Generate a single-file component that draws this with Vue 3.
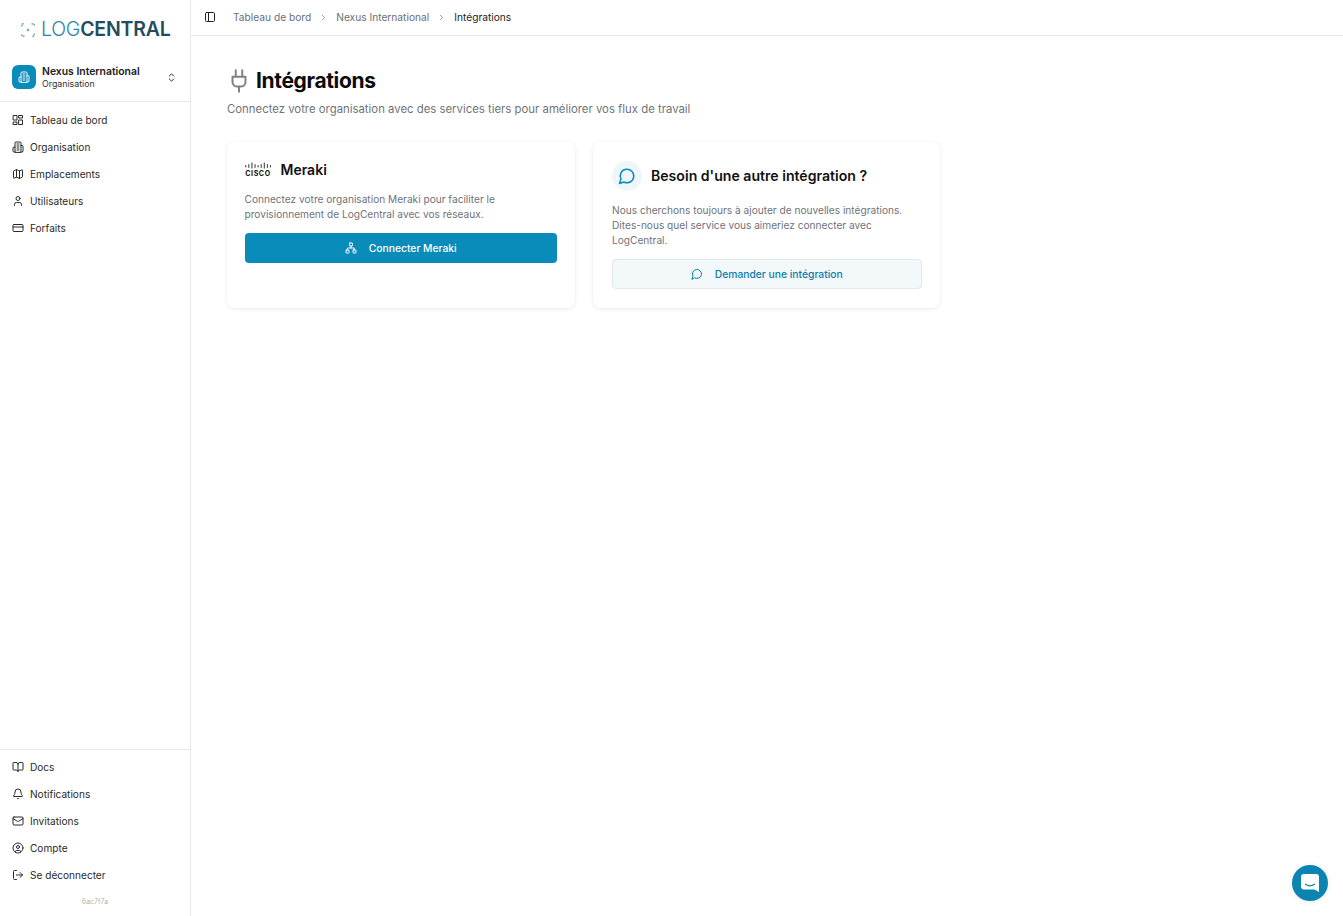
<script setup>
const mainNav = [
  { label: 'Tableau de bord', icon: 'dash' },
  { label: 'Organisation', icon: 'org' },
  { label: 'Emplacements', icon: 'map' },
  { label: 'Utilisateurs', icon: 'user' },
  { label: 'Forfaits', icon: 'card' }
]
const bottomNav = [
  { label: 'Docs', icon: 'book' },
  { label: 'Notifications', icon: 'bell' },
  { label: 'Invitations', icon: 'mail' },
  { label: 'Compte', icon: 'account' },
  { label: 'Se déconnecter', icon: 'logout' }
]
const icons = {
  dash: 'M3 3h7v9H3zM14 3h7v5h-7zM14 12h7v9h-7zM3 16h7v5H3z',
  org: 'M6 22V4a2 2 0 0 1 2-2h8a2 2 0 0 1 2 2v18zM6 12H4a2 2 0 0 0-2 2v6a2 2 0 0 0 2 2h2M18 9h2a2 2 0 0 1 2 2v9a2 2 0 0 1-2 2h-2M10 6h4M10 10h4M10 14h4M10 18h4',
  map: 'M14.106 5.553a2 2 0 0 0 1.788 0l3.659-1.83A1 1 0 0 1 21 4.619v12.764a1 1 0 0 1-.553.894l-4.553 2.277a2 2 0 0 1-1.788 0l-4.212-2.106a2 2 0 0 0-1.788 0l-3.659 1.83A1 1 0 0 1 3 19.381V6.618a1 1 0 0 1 .553-.894l4.553-2.277a2 2 0 0 1 1.788 0zM15 5.764v15M9 3.236v15',
  user: 'M19 21v-2a4 4 0 0 0-4-4H9a4 4 0 0 0-4 4v2M16 7a4 4 0 1 1-8 0 4 4 0 0 1 8 0z',
  card: 'M4 5h16a2 2 0 0 1 2 2v10a2 2 0 0 1-2 2H4a2 2 0 0 1-2-2V7a2 2 0 0 1 2-2zM2 10h20',
  book: 'M12 7v14M3 18a1 1 0 0 1-1-1V4a1 1 0 0 1 1-1h5a4 4 0 0 1 4 4 4 4 0 0 1 4-4h5a1 1 0 0 1 1 1v13a1 1 0 0 1-1 1h-6a3 3 0 0 0-3 3 3 3 0 0 0-3-3z',
  bell: 'M10.268 21a2 2 0 0 0 3.464 0M3.262 15.326A1 1 0 0 0 4 17h16a1 1 0 0 0 .74-1.673C19.41 13.956 18 12.499 18 8A6 6 0 0 0 6 8c0 4.499-1.411 5.956-2.738 7.326',
  mail: 'M4 4h16a2 2 0 0 1 2 2v12a2 2 0 0 1-2 2H4a2 2 0 0 1-2-2V6a2 2 0 0 1 2-2zM22 7l-8.97 5.7a1.94 1.94 0 0 1-2.06 0L2 7',
  account: 'M22 12a10 10 0 1 1-20 0 10 10 0 0 1 20 0zM15 10a3 3 0 1 1-6 0 3 3 0 0 1 6 0zM7 20.662V19a2 2 0 0 1 2-2h6a2 2 0 0 1 2 2v1.662',
  logout: 'M9 21H5a2 2 0 0 1-2-2V5a2 2 0 0 1 2-2h4M16 17l5-5-5-5M21 12H9'
}
const bubble = 'M7.9 20A9 9 0 1 0 4 16.1L2 22Z'
</script>

<template>
  <div class="app">
    <aside class="sidebar">
      <div class="logo">
        <svg class="logo-mark" viewBox="0 0 16 16" fill="none" stroke="#3c5a66" stroke-width="1">
          <path d="M1 4V1h3M12 1h3v3M15 12v3h-3M4 15H1v-3" stroke-dasharray="2 1" />
          <path d="M6.5 8h3M8 6.5v3" stroke="#2e8fb5" />
        </svg>
        <span class="logo-text"><span class="logo-light">LOG</span><span class="logo-bold">CENTRAL</span></span>
      </div>

      <div class="org">
        <div class="org-badge">
          <svg viewBox="0 0 24 24" fill="none" stroke="#fff" stroke-width="1.8" stroke-linecap="round" stroke-linejoin="round">
            <path :d="icons.org" />
          </svg>
        </div>
        <div class="org-info">
          <div class="org-name">Nexus International</div>
          <div class="org-type">Organisation</div>
        </div>
        <svg class="org-chevron" viewBox="0 0 24 24" fill="none" stroke="#222" stroke-width="2" stroke-linecap="round" stroke-linejoin="round">
          <path d="m7 15 5 5 5-5M7 9l5-5 5 5" />
        </svg>
      </div>

      <nav class="nav">
        <a v-for="item in mainNav" :key="item.label" class="nav-item">
          <svg viewBox="0 0 24 24" fill="none" stroke="currentColor" stroke-width="2" stroke-linecap="round" stroke-linejoin="round">
            <path :d="icons[item.icon]" />
          </svg>
          <span>{{ item.label }}</span>
        </a>
      </nav>

      <nav class="nav nav-bottom">
        <a v-for="item in bottomNav" :key="item.label" class="nav-item">
          <svg viewBox="0 0 24 24" fill="none" stroke="currentColor" stroke-width="2" stroke-linecap="round" stroke-linejoin="round">
            <path :d="icons[item.icon]" />
          </svg>
          <span>{{ item.label }}</span>
        </a>
      </nav>
      <div class="version">6ac7f7a</div>
    </aside>

    <div class="main">
      <header class="topbar">
        <svg class="panel-icon" viewBox="0 0 24 24" fill="none" stroke="#222" stroke-width="2" stroke-linecap="round" stroke-linejoin="round">
          <rect x="3" y="3" width="18" height="18" rx="2" />
          <path d="M9 3v18" />
        </svg>
        <div class="crumbs">
          <span>Tableau de bord</span>
          <svg viewBox="0 0 24 24" fill="none" stroke="#777" stroke-width="2" stroke-linecap="round" stroke-linejoin="round"><path d="m9 18 6-6-6-6" /></svg>
          <span>Nexus International</span>
          <svg viewBox="0 0 24 24" fill="none" stroke="#777" stroke-width="2" stroke-linecap="round" stroke-linejoin="round"><path d="m9 18 6-6-6-6" /></svg>
          <span class="crumb-current">Intégrations</span>
        </div>
      </header>

      <main class="content">
        <div class="title-row">
          <svg class="plug" viewBox="0 0 24 24" fill="none" stroke="#808080" stroke-width="1.8" stroke-linecap="round" stroke-linejoin="round">
            <path d="M12 22v-5M9 8V2M15 8V2M18 8v5a4 4 0 0 1-4 4h-4a4 4 0 0 1-4-4V8z" />
          </svg>
          <h1>Intégrations</h1>
        </div>
        <p class="subtitle">Connectez votre organisation avec des services tiers pour améliorer vos flux de travail</p>

        <div class="cards">
          <section class="card card-meraki">
            <div class="card-head">
              <div class="cisco">
                <svg viewBox="0 0 28 8" stroke="#111" stroke-width="0.9" stroke-linecap="round">
                  <path d="M1 3.5v1.5M4.2 2.5v3M7.4 0.8v5.4M10.6 2.5v3M13.8 3.5v1.5M17 2.5v3M20.2 0.8v5.4M23.4 2.5v3M26.6 3.5v1.5" transform="translate(-.2 0)" />
                </svg>
                <span>CISCO</span>
              </div>
              <h2>Meraki</h2>
            </div>
            <p class="card-text">Connectez votre organisation Meraki pour faciliter le<br>provisionnement de LogCentral avec vos réseaux.</p>
            <button class="btn btn-primary">
              <svg viewBox="0 0 24 24" fill="none" stroke="currentColor" stroke-width="2" stroke-linecap="round" stroke-linejoin="round">
                <rect x="16" y="16" width="6" height="6" rx="1" />
                <rect x="2" y="16" width="6" height="6" rx="1" />
                <rect x="9" y="2" width="6" height="6" rx="1" />
                <path d="M5 16v-3a1 1 0 0 1 1-1h12a1 1 0 0 1 1 1v3M12 12V8" />
              </svg>
              Connecter Meraki
            </button>
          </section>

          <section class="card card-request">
            <div class="card-head">
              <div class="bubble-badge">
                <svg viewBox="0 0 24 24" fill="none" stroke="#0a8cba" stroke-width="2" stroke-linecap="round" stroke-linejoin="round">
                  <path :d="bubble" />
                </svg>
              </div>
              <h2 class="request-title">Besoin d'une autre intégration ?</h2>
            </div>
            <p class="card-text">Nous cherchons toujours à ajouter de nouvelles intégrations.<br>Dites-nous quel service vous aimeriez connecter avec<br>LogCentral.</p>
            <button class="btn btn-soft">
              <svg viewBox="0 0 24 24" fill="none" stroke="currentColor" stroke-width="2" stroke-linecap="round" stroke-linejoin="round">
                <path :d="bubble" />
              </svg>
              Demander une intégration
            </button>
          </section>
        </div>
      </main>
    </div>

    <button class="chat-launcher" aria-label="Chat">
      <svg viewBox="0 0 24 24" fill="#fff">
        <path d="M6 3h12a3 3 0 0 1 3 3v15l-4.5-2.5H6a3 3 0 0 1-3-3V6a3 3 0 0 1 3-3z" />
        <path d="M7.5 13.2c2.8 2 6.2 2 9 0" fill="none" stroke="#0a84b0" stroke-width="1.2" stroke-linecap="round" />
      </svg>
    </button>
  </div>
</template>

<style>
html, body {
  margin: 0;
  background: #fff;
}
</style>

<style scoped>
.app {
  display: flex;
  height: 916px;
  overflow: hidden;
  font-family: Inter, "Liberation Sans", sans-serif;
  font-size: 10.1px;
  color: #222;
  background: #fff;
}

.sidebar {
  width: 190px;
  flex-shrink: 0;
  display: flex;
  flex-direction: column;
  border-right: 1px solid #e8e9eb;
  background: #fff;
}

.logo {
  height: 60px;
  display: flex;
  align-items: center;
  gap: 6px;
  padding-left: 21px;
  box-sizing: border-box;
}

.logo-mark {
  width: 14px;
  height: 14px;
}

.logo-text {
  font-size: 19.5px;
  letter-spacing: -0.2px;
  line-height: 1;
}

.logo-light {
  font-weight: 300;
  color: #2c85a8;
}

.logo-bold {
  font-weight: 600;
  color: #1f4d61;
}

.org {
  height: 42px;
  box-sizing: border-box;
  display: flex;
  align-items: flex-start;
  padding: 5px 13px 0 12px;
  border-bottom: 1px solid #e8e9eb;
}

.org-badge {
  width: 24px;
  height: 24px;
  border-radius: 6px;
  background: #0a8cba;
  display: flex;
  align-items: center;
  justify-content: center;
}

.org-badge svg {
  width: 12px;
  height: 12px;
}

.org-info {
  flex: 1;
  margin-left: 6px;
}

.org-name {
  font-weight: 600;
  font-size: 10.4px;
  line-height: 13px;
  color: #222;
}

.org-type {
  font-size: 8.8px;
  line-height: 12px;
  color: #333;
}

.org-chevron {
  width: 11px;
  height: 11px;
  margin-top: 7px;
}

.nav {
  display: flex;
  flex-direction: column;
  padding-top: 4px;
}

.nav-bottom {
  margin-top: auto;
  border-top: 1px solid #e8e9eb;
  padding-top: 3px;
  padding-bottom: 1px;
}

.nav-item {
  height: 27px;
  display: flex;
  align-items: center;
  gap: 6px;
  padding-left: 12px;
  color: #2a2a2a;
}

.nav-item svg {
  width: 12px;
  height: 12px;
  flex-shrink: 0;
}

.version {
  height: 27px;
  padding-top: 8px;
  box-sizing: border-box;
  text-align: center;
  font-size: 7px;
  color: #b5b5b5;
}

.main {
  flex: 1;
  min-width: 0;
}

.topbar {
  height: 36px;
  box-sizing: border-box;
  display: flex;
  align-items: center;
  padding: 0 0 1px 13px;
  border-bottom: 1px solid #e8e9eb;
}

.panel-icon {
  width: 12px;
  height: 12px;
}

.crumbs {
  display: flex;
  align-items: center;
  gap: 8px;
  margin-left: 17px;
  font-size: 10.2px;
  color: #6b6f76;
}

.crumbs svg {
  width: 9px;
  height: 9px;
}

.crumb-current {
  color: #222;
}

.content {
  padding: 30px 36px 0;
}

.title-row {
  display: flex;
  align-items: center;
  gap: 4.5px;
}

.plug {
  width: 26px;
  height: 26px;
  margin-left: -1.5px;
}

h1 {
  margin: 0;
  font-size: 21px;
  font-weight: 700;
  letter-spacing: -0.35px;
  line-height: 29px;
  color: #0b0b0b;
}

.subtitle {
  margin: 6px 0 0;
  font-size: 11.36px;
  line-height: 16px;
  color: #70747a;
}

.cards {
  display: flex;
  gap: 18px;
  margin-top: 25px;
}

.card {
  width: 348px;
  height: 166px;
  box-sizing: border-box;
  border-radius: 8px;
  background: #fff;
  box-shadow: 0 1px 4px rgba(0, 0, 0, 0.09);
}

.card-meraki {
  padding: 15px 18px 0 17.5px;
}

.card-request {
  width: 347px;
  padding: 19px 18.5px 0 19px;
}

.card-head {
  display: flex;
  align-items: center;
}

.cisco {
  width: 27px;
  margin-right: 9px;
  display: flex;
  flex-direction: column;
  align-items: center;
  color: #111;
}

.cisco svg {
  width: 27px;
  height: 8px;
}

.cisco span {
  font-size: 7px;
  font-weight: 700;
  line-height: 7px;
  letter-spacing: 0.6px;
}

h2 {
  margin: 0;
  font-size: 14px;
  font-weight: 600;
  line-height: 25px;
  color: #111;
}

.request-title {
  margin-left: 9px;
  font-size: 14.1px;
  line-height: 30px;
}

.bubble-badge {
  width: 30px;
  height: 30px;
  border-radius: 50%;
  background: #eff6f9;
  display: flex;
  align-items: center;
  justify-content: center;
}

.bubble-badge svg {
  width: 18px;
  height: 18px;
}

.card-text {
  margin: 10px 0 0;
  font-size: 10.15px;
  line-height: 15px;
  color: #70747a;
}

.card-request .card-text {
  margin-top: 12px;
}

.btn {
  width: 100%;
  height: 30px;
  margin-top: 11px;
  display: flex;
  align-items: center;
  justify-content: center;
  gap: 12px;
  font-family: inherit;
  font-size: 10.3px;
  font-weight: 500;
  border-radius: 4px;
  cursor: pointer;
}

.btn svg {
  width: 12px;
  height: 12px;
}

.btn-primary {
  border: 0;
  background: #0a8cba;
  color: #fff;
}

.btn-soft {
  border: 1px solid #dfe8ed;
  background: #f3f8fb;
  color: #0a7fab;
}

.chat-launcher {
  position: absolute;
  right: 15px;
  bottom: 15px;
  width: 36px;
  height: 36px;
  border: 0;
  border-radius: 50%;
  padding: 0;
  background: #0a84b0;
  display: flex;
  align-items: center;
  justify-content: center;
  box-shadow: 0 1px 6px rgba(0, 0, 0, 0.08);
}

.chat-launcher svg {
  width: 24px;
  height: 24px;
}
</style>
